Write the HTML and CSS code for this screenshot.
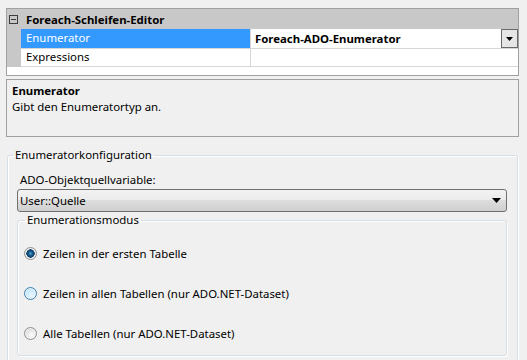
FILE: index.html
```html
<!DOCTYPE html>
<html lang="de">
<head>
    <meta charset="UTF-8">
    <title>Foreach-Schleifen-Editor</title>
    <link rel="stylesheet" href="styles.css">
</head>
<body>
    <div class="grid">
        <div class="cat">
            <span class="toggle"></span>
            <span class="cat-name">Foreach-Schleifen-Editor</span>
        </div>
        <div class="row selected">
            <div class="gutter"></div>
            <div class="name">Enumerator</div>
            <div class="value strong">
                <span>Foreach-ADO-Enumerator</span>
                <span class="drop">
                    <svg width="7" height="4" viewBox="0 0 7 4"><path d="M0 0h7L3.5 4z" fill="#000"/></svg>
                </span>
            </div>
        </div>
        <div class="row">
            <div class="gutter"></div>
            <div class="name">Expressions</div>
            <div class="value"></div>
        </div>
        <div class="grid-tail"></div>
    </div>

    <div class="help">
        <div class="help-title">Enumerator</div>
        <div>Gibt den Enumeratortyp an.</div>
    </div>

    <fieldset class="group">
        <legend>Enumeratorkonfiguration</legend>
        <div class="field-label">ADO-Objektquellvariable:</div>
        <div class="combo">
            <span>User::Quelle</span>
            <svg width="9" height="5" viewBox="0 0 9 5"><path d="M0 0h9L4.5 5z" fill="#000"/></svg>
        </div>
        <fieldset class="group inner">
            <legend>Enumerationsmodus</legend>
            <label class="radio-row"><span class="radio checked"></span>Zeilen in der ersten Tabelle</label>
            <label class="radio-row"><span class="radio hover"></span>Zeilen in allen Tabellen (nur ADO.NET-Dataset)</label>
            <label class="radio-row"><span class="radio"></span>Alle Tabellen (nur ADO.NET-Dataset)</label>
        </fieldset>
    </fieldset>
</body>
</html>
```

FILE: styles.css
```css
html, body {
    height: 100%;
}
body {
    margin: 0;
    background-color: #f0f0f0;
    font-family: "Noto Sans", "Open Sans", sans-serif;
    font-size: 11.4px;
    color: #000;
    overflow: hidden;
}

/* property grid */
.grid {
    margin: 8px 8px 0 6px;
    border: 1px solid #a0a0a0;
    background-color: #fff;
}
.cat {
    height: 20px;
    display: flex;
    align-items: center;
    background-color: #c8c8c8;
}
.toggle {
    width: 7px;
    height: 7px;
    margin-left: 2px;
    border: 1px solid #3c3c3c;
    background: linear-gradient(#3c3c3c, #3c3c3c) center / 5px 1px no-repeat;
}
.cat-name {
    margin-left: 8px;
    font-weight: bold;
}
.row {
    display: grid;
    grid-template-columns: 14px 230px 1fr;
    height: 19px;
}
.gutter {
    background-color: #c8c8c8;
}
.name, .value {
    border-bottom: 1px solid #d6d6d6;
    line-height: 18px;
    padding-left: 5px;
    white-space: nowrap;
}
.name {
    border-right: 1px solid #d6d6d6;
}
.selected .name {
    background-color: #3399ff;
    color: #fff;
}
.value {
    display: flex;
    align-items: center;
    padding-left: 4px;
}
.strong {
    font-weight: bold;
}
.drop {
    margin-left: auto;
    width: 15px;
    height: 17px;
    border: 1px solid #6a6a6a;
    background-color: #e6e6e6;
    display: flex;
    align-items: center;
    justify-content: center;
}
.grid-tail {
    height: 8px;
}

/* description panel */
.help {
    margin: 3px 8px 0 6px;
    height: 53px;
    padding: 3px 5px 0;
    border: 1px solid #a0a0a0;
    line-height: 16px;
}
.help-title {
    font-weight: bold;
}

/* group boxes */
.group {
    margin: 10px 9px 0 7px;
    padding: 9px 10px 20px 9px;
    border: 1px solid #d5dfe5;
    border-radius: 3px;
    box-shadow: inset 1px 1px 0 #fff, 1px 1px 0 #fff;
    min-width: 0;
}
.group legend {
    padding: 0 2px;
    margin-left: -4px;
    line-height: 16px;
}
.field-label {
    line-height: 16px;
    padding-left: 3px;
}
.combo {
    margin-top: 1px;
    height: 21px;
    border: 1px solid #707070;
    border-radius: 3px;
    background: linear-gradient(#f2f2f2, #ebebeb 50%, #dddddd 50%, #cfcfcf);
    display: flex;
    align-items: center;
    justify-content: space-between;
    padding: 0 5px 0 2px;
}
.group.inner {
    margin: 0;
    padding: 5px 0 2px 6px;
}
.group.inner legend {
    margin-left: 1px;
}
.radio-row {
    height: 40px;
    display: flex;
    align-items: center;
}
.radio {
    width: 11px;
    height: 11px;
    margin-right: 6px;
    border: 1px solid #8e8f8f;
    border-radius: 50%;
    background: radial-gradient(circle at 60% 65%, #fdfdfd, #dcdcdc 70%, #cfcfcf);
    box-shadow: inset 0 0 0 1px #f4f4f4;
}
.radio.checked {
    background: radial-gradient(circle at 50% 50%, #4ea6d8 0, #1a5c8c 2px, #0b3e66 4px, #e8e8e8 4.5px, #d6d6d6 100%);
}
.radio.hover {
    border-color: #3c7fb1;
    background: radial-gradient(circle at 60% 65%, #eaf6fd, #bde6fd 70%, #a7d9f5);
}
```
